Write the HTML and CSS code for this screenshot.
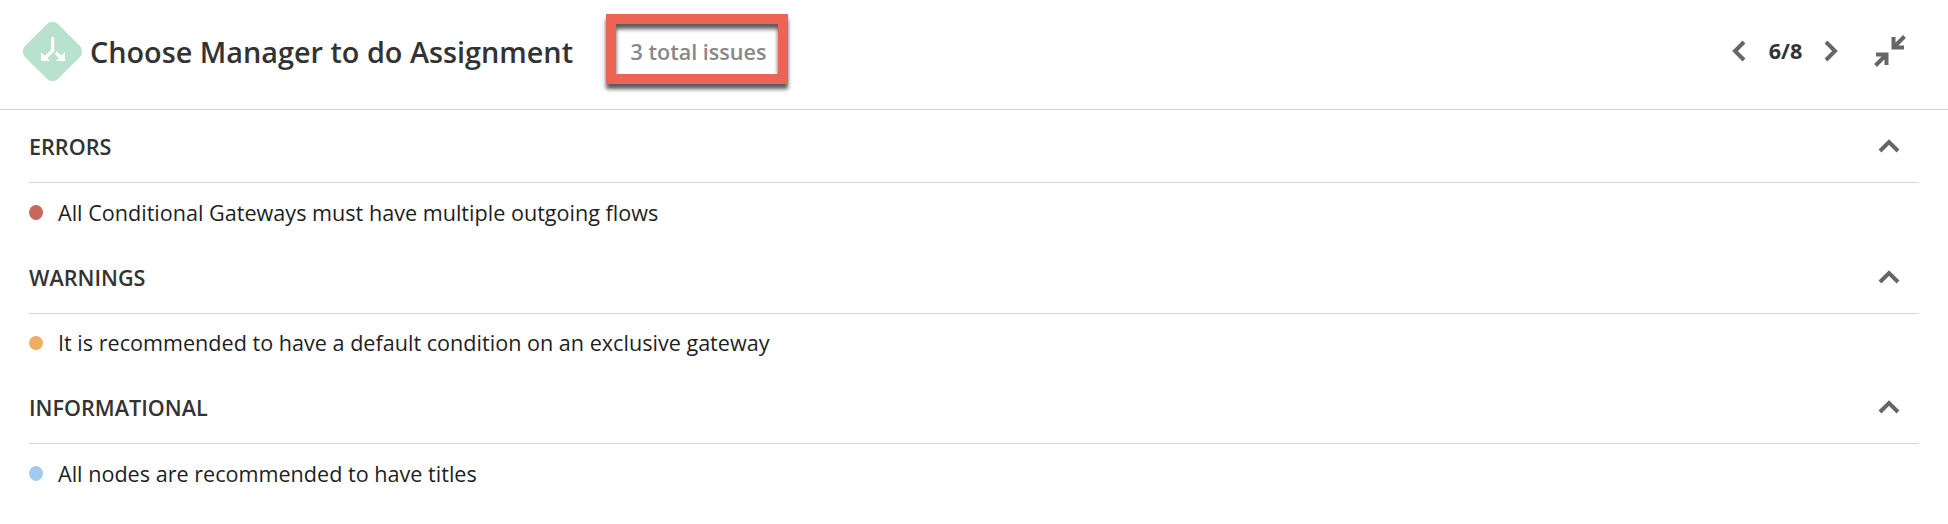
FILE: index.html
```html
<!DOCTYPE html>
<html lang="en">
<head>
<meta charset="utf-8">
<title>Issues</title>
<link rel="stylesheet" href="styles.css">
</head>
<body>
<header class="header">
  <svg class="node-icon" viewBox="0 0 60 60" width="60" height="60">
    <rect class="node-shape" x="6.200" y="6.200" width="46.600" height="46.600" rx="8" transform="rotate(45 29.500 29.500)"/>
    <path class="node-line" d="M29.700 15v13.500l-8.500 8.500M32.700 30.500l6 6"/>
    <path class="node-head" d="M18 30v9h9zM42 30v9h-9z"/>
  </svg>
  <h1 class="title">Choose Manager to do Assignment</h1>
  <div class="total">3 total issues</div>
  <nav class="pager">
    <svg class="chevron" viewBox="0 0 14 22" width="14" height="22"><path d="M12 2 3 11l9 9"/></svg>
    <span class="page">6/8</span>
    <svg class="chevron" viewBox="0 0 14 22" width="14" height="22"><path d="m2 2 9 9-9 9"/></svg>
  </nav>
  <svg class="collapse" viewBox="0 0 32 32" width="32" height="32">
    <path d="M30.500 1.500 20 12M19.500 2v10.500H30M1.500 30.500 12 20M2 19.500h10.500V30"/>
  </svg>
</header>
<main class="issues">
  <section class="group">
    <div class="group-head"><h2 class="group-title">ERRORS</h2><svg class="chevron" viewBox="0 0 22 14" width="22" height="14"><path d="m2 12 9-9 9 9"/></svg></div>
    <p class="issue"><span class="dot dot-error"></span><span>All Conditional Gateways must have multiple outgoing flows</span></p>
  </section>
  <section class="group">
    <div class="group-head"><h2 class="group-title">WARNINGS</h2><svg class="chevron" viewBox="0 0 22 14" width="22" height="14"><path d="m2 12 9-9 9 9"/></svg></div>
    <p class="issue issue-warning"><span class="dot dot-warning"></span><span>It is recommended to have a default condition on an exclusive gateway</span></p>
  </section>
  <section class="group">
    <div class="group-head"><h2 class="group-title">INFORMATIONAL</h2><svg class="chevron" viewBox="0 0 22 14" width="22" height="14"><path d="m2 12 9-9 9 9"/></svg></div>
    <p class="issue"><span class="dot dot-info"></span><span>All nodes are recommended to have titles</span></p>
  </section>
</main>
</body>
</html>
```

FILE: styles.css
```css
* { box-sizing: border-box; }
body {
  margin: 0;
  min-height: 524px;
  background: #fff;
  color: #1f1f1f;
  font-family: "Open Sans", "Noto Sans", sans-serif;
  font-size: 21.6px;
}
h1, h2, p { margin: 0; }
.header {
  display: flex;
  align-items: flex-start;
  height: 110px;
  padding: 14px 42px 0 23px;
  border-bottom: 1px solid #d4d6d6;
}
.node-icon { flex: none; margin-top: 8px; }
.node-shape { fill: #b8e2cd; }
.node-line { fill: none; stroke: #fff; stroke-width: 3.2; }
.node-head { fill: #fff; }
.title {
  width: 523px;
  padding-left: 7px;
  margin-top: 18px;
  color: #333;
  font-size: 28.8px;
  font-weight: 600;
  line-height: 40px;
  white-space: nowrap;
}
.total {
  display: flex;
  align-items: center;
  justify-content: center;
  width: 182px;
  height: 70px;
  padding: 8px 0 2px 3px;
  border: 10px solid #ec6453;
  box-shadow: 0 5px 4px rgba(0, 0, 0, .65), inset 0 5px 4px rgba(0, 0, 0, .65);
  color: #888;
  font-weight: 600;
  line-height: 30px;
  white-space: nowrap;
}
.pager {
  display: flex;
  align-items: center;
  justify-content: space-between;
  width: 106px;
  height: 30px;
  margin: 22px 36px 0 auto;
}
.page { padding-left: 1px; color: #333; font-weight: 700; line-height: 30px; }
.chevron, .collapse { flex: none; fill: none; stroke: #666; stroke-width: 4; }
.collapse { margin-top: 21px; }
.issues { padding: 0 29px; }
.group { height: 131px; }
.group + .group { height: 130px; }
.group-head {
  display: flex;
  align-items: center;
  justify-content: space-between;
  height: 73px;
  padding: 0 19px 0 0;
  border-bottom: 1px solid #d4d6d6;
}
.group-title { padding-top: 2px; color: #333; font-size: 21.6px; font-weight: 600; line-height: 30px; }
.issue { display: flex; align-items: center; height: 59px; gap: 15px; line-height: 30px; }
.issue-warning { height: 58px; }
.dot { width: 14px; height: 15px; border-radius: 50%; }
.dot-error { background: #c6685e; }
.dot-warning { height: 14px; background: #eead62; }
.dot-info { background: #a3cbeb; }
```
